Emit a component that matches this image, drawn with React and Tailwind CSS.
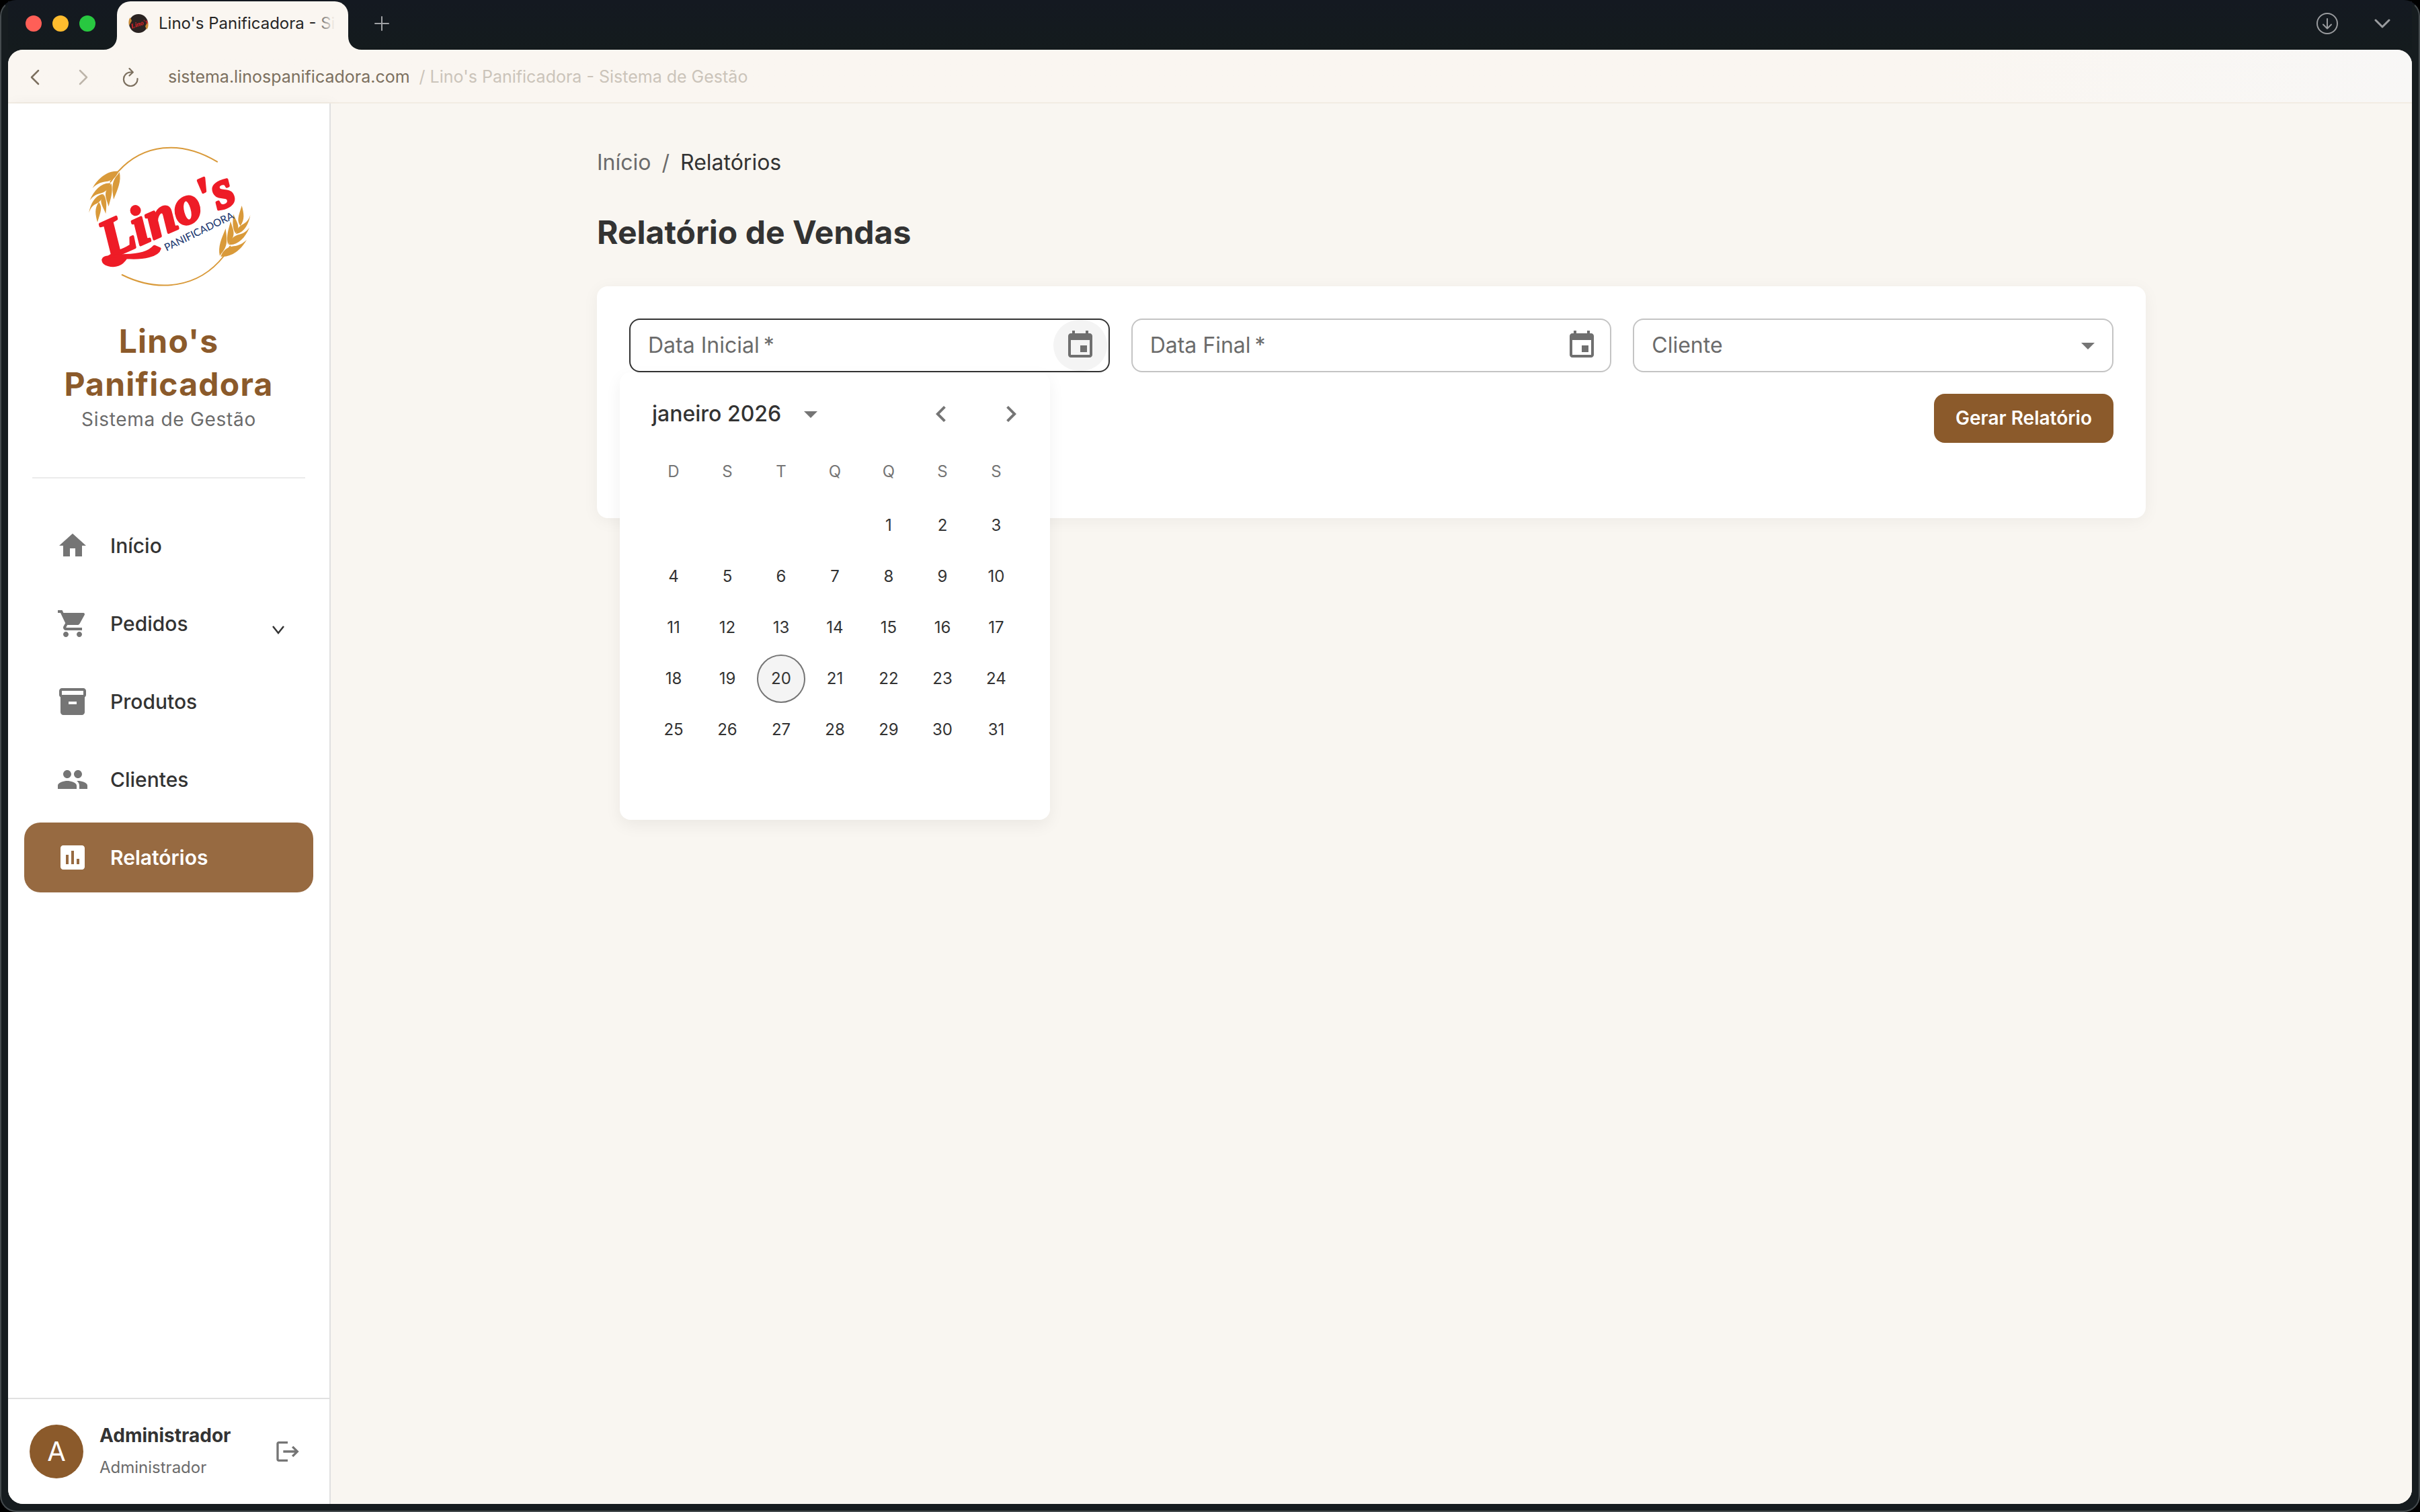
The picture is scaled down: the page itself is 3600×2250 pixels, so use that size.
import React, { useState } from 'react';
import { MdHome, MdShoppingCart, MdPeople, MdLogout, MdArrowDropDown, MdChevronLeft, MdChevronRight } from 'react-icons/md';

const WEEKDAYS = ['D', 'S', 'T', 'Q', 'Q', 'S', 'S'];
const DAYS = Array.from({ length: 31 }, (_, i) => i + 1);
const TODAY = 20;

const InventoryIcon = (props) => (
  <svg viewBox="0 0 24 24" fill="currentColor" {...props}>
    <path fillRule="evenodd" d="M20 2H4c-1 0-2 .9-2 2v3.01c0 .72.43 1.34 1 1.69V20c0 1.1 1.1 2 2 2h14c.9 0 2-.9 2-2V8.7c.57-.35 1-.97 1-1.69V4c0-1.1-1-2-2-2zM15 14H9v-2h6v2zm5-7H4V4h16v3z" />
  </svg>
);

const ReportIcon = (props) => (
  <svg viewBox="0 0 24 24" fill="currentColor" {...props}>
    <path d="M19 3H5c-1.1 0-2 .9-2 2v14c0 1.1.9 2 2 2h14c1.1 0 2-.9 2-2V5c0-1.1-.9-2-2-2zM9 17H7v-7h2v7zm4 0h-2V7h2v10zm4 0h-2v-4h2v4z" />
  </svg>
);

const CalendarIcon = (props) => (
  <svg viewBox="0 0 24 24" fill="currentColor" {...props}>
    <path d="M17 12h-5v5h5v-5zM16 1v2H8V1H6v2H5c-1.11 0-1.99.9-1.99 2L3 19c0 1.1.89 2 2 2h14c1.1 0 2-.9 2-2V5c0-1.1-.9-2-2-2h-1V1h-2zm3 18H5V8h14v11z" />
  </svg>
);

const MENU = [
  { label: 'Início', icon: MdHome },
  { label: 'Pedidos', icon: MdShoppingCart, expandable: true },
  { label: 'Produtos', icon: InventoryIcon },
  { label: 'Clientes', icon: MdPeople },
  { label: 'Relatórios', icon: ReportIcon, active: true },
];

function Wheat(props) {
  return (
    <g fill="#d99a3a" {...props}>
      <path d="M50 240C76 192 122 160 166 165C156 190 140 207 108 211C84 214 66 224 50 240Z" />
      <path d="M170 168C180 208 162 246 144 290C141 258 128 216 162 180Z" />
      <path d="M38 294C58 246 92 213 131 218C122 246 106 258 82 264C62 269 50 279 38 294Z" />
      <path d="M134 220C143 256 130 288 122 322C112 286 94 262 128 226Z" />
      <path d="M34 350C42 302 68 268 98 266C94 292 80 303 62 312C48 320 40 332 34 350Z" />
      <path d="M100 268C116 296 112 324 109 354C98 324 76 300 96 274Z" />
      <path d="M78 302C96 326 86 346 72 392C62 356 58 330 78 302Z" />
    </g>
  );
}

function Logo() {
  return (
    <svg viewBox="0 0 780 720" className="h-60 w-[260px]" role="img" aria-label="Lino's Panificadora">
      <g fill="none" stroke="#d99a3a" strokeWidth="6" strokeLinecap="round">
        <path d="M130 212L165 165C275 45 440 22 606 122" />
        <path d="M182 627C340 705 520 690 636 543L664 500" />
      </g>
      <Wheat />
      <Wheat transform="rotate(180 394 355)" />
      <g fill="#ee1c27" stroke="#ee1c27" strokeWidth="12" strokeLinejoin="round">
        <text transform="translate(124 556) rotate(-24)" className="font-['Liberation_Serif'] text-[242px] font-bold italic">Lino's</text>
        <path d="M196 540C250 540 300 530 326 500L350 510C342 540 280 556 200 550C180 582 150 592 120 582C92 574 90 552 112 548C140 545 170 541 196 540Z" />
      </g>
      <text transform="translate(380 522) rotate(-26)" fill="#1f3c73" className="font-['Lato'] text-[46px] font-medium">PANIFICADORA</text>
    </svg>
  );
}

function BrowserTabs() {
  return (
    <div className="flex h-[72px] items-stretch bg-linear-to-b from-[#141921] to-[#141b1d]">
      <div className="flex w-[162px] items-center gap-4 pb-1.5 pl-[26px]">
        <span className="size-6 rounded-full bg-[#ff5f57]" />
        <span className="size-6 rounded-full bg-[#febc2e]" />
        <span className="size-6 rounded-full bg-[#28c840]" />
      </div>
      <div className="relative flex w-[344px] items-center gap-3.5 rounded-t-[20px] bg-[#faf6f1] pb-1.5 pl-4">
        <svg viewBox="0 0 20 20" className="absolute bottom-0 -left-5 size-5" fill="#faf6f1"><path d="M20 0V20H0C12 20 20 12 20 0Z" /></svg>
        <svg viewBox="0 0 20 20" className="absolute -right-5 bottom-0 size-5" fill="#faf6f1"><path d="M0 0V20H20C8 20 0 12 0 0Z" /></svg>
        <svg viewBox="0 0 32 28" className="h-7 w-8 shrink-0">
          <ellipse cx="16" cy="14" rx="14" ry="14" fill="#2a2322" />
          <path d="M4 5C1 8 1 13 2 17L6 10Z" fill="#c98a35" />
          <path d="M28 23C31 20 31 15 30 11L26 18Z" fill="#c98a35" />
          <text x="4" y="18" transform="rotate(-18 16 14)" fill="#e02229" className="font-['Liberation_Serif'] text-[10px] font-bold italic">Lino's</text>
        </svg>
        <div className="relative text-2xl whitespace-nowrap text-[#262626]">
          Lino's Panificadora - Si
          <span className="absolute inset-y-0 right-0 w-8 bg-linear-to-r from-transparent to-[#faf6f1]" />
        </div>
      </div>
      <button aria-label="Nova aba" className="ml-[38px] flex items-center pb-1.5 text-[#a0a2a5]">
        <svg viewBox="0 0 24 24" className="size-6" fill="none" stroke="currentColor" strokeWidth="2" strokeLinecap="round"><path d="M12 2V22M2 12H22" /></svg>
      </button>
      <div className="ml-auto flex items-center gap-[52px] pr-8 pb-1.5 text-[#9a9c9f]">
        <button aria-label="Downloads">
          <svg viewBox="0 0 36 36" className="size-9" fill="none" stroke="currentColor" strokeWidth="2" strokeLinecap="round" strokeLinejoin="round"><circle cx="18" cy="18" r="15" /><path d="M18 11V25M12 19.500L18 25.500L24 19.500" /></svg>
        </button>
        <button aria-label="Listar abas">
          <svg viewBox="0 0 24 24" className="size-6" fill="none" stroke="currentColor" strokeWidth="3" strokeLinecap="round" strokeLinejoin="round"><path d="M2 7L12 17L22 7" /></svg>
        </button>
      </div>
    </div>
  );
}

function AddressBar() {
  return (
    <div className="flex h-20 items-center border-b-2 border-[#f2ece3] bg-linear-to-r from-[#faf6f1] from-80% to-[#f8f7f6] pt-1 pl-7 text-[25px] text-[#7c705f]">
      <button aria-label="Voltar">
        <svg viewBox="0 0 24 24" className="size-6" fill="none" stroke="currentColor" strokeWidth="2.500" strokeLinecap="round" strokeLinejoin="round"><path d="M17 2L7 12L17 22" /></svg>
      </button>
      <button aria-label="Avançar" className="ml-12 text-[#bdb5aa]">
        <svg viewBox="0 0 24 24" className="size-6" fill="none" stroke="currentColor" strokeWidth="2.500" strokeLinecap="round" strokeLinejoin="round"><path d="M7 2L17 12L7 22" /></svg>
      </button>
      <button aria-label="Recarregar" className="ml-11">
        <svg viewBox="0 0 28 28" className="size-7" fill="none" stroke="currentColor" strokeWidth="2.200" strokeLinecap="round" strokeLinejoin="round"><path d="M17.500 6.500H14A10.300 10.300 0 1 0 24.500 16M12.500 1L17.800 6.500L12.500 11.500" /></svg>
      </button>
      <span className="ml-[42px]">sistema.linospanificadora.com</span>
      <span className="ml-3.5 text-[#cbc4ba]">/ Lino's Panificadora - Sistema de Gestão</span>
    </div>
  );
}

function Sidebar() {
  return (
    <aside className="flex w-[480px] shrink-0 flex-col border-r-2 border-[#e0e0e0] bg-white shadow-[4px_0_20px_rgba(0,0,0,0.04)]">
      <div className="mx-9 flex flex-col items-center border-b-2 border-[#ebebeb] pt-[46px] pb-[66px] text-center">
        <Logo />
        <h1 className="mt-9 text-5xl leading-[64px] font-bold tracking-wide text-[#8b5a2b]">Lino's Panificadora</h1>
        <p className="text-[28px] leading-10 tracking-wide text-[#6b6b6b]">Sistema de Gestão</p>
      </div>
      <nav className="mt-12 flex flex-col gap-3 px-6">
        {MENU.map(item => {
          const Icon = item.icon;
          return (
            <a key={item.label} href="#" className={`flex h-[104px] items-center rounded-3xl pr-[42px] pl-12 text-[30px] ${item.active ? 'bg-[#976a41] font-semibold text-white' : 'font-medium text-[#333333]'}`}>
              <Icon className={`size-12 ${item.active ? 'text-white' : 'text-[#757575]'}`} />
              <span className="ml-8">{item.label}</span>
              {item.expandable && <svg viewBox="0 0 20 14" className="mt-5 ml-auto h-3.5 w-5" fill="none" stroke="currentColor" strokeWidth="2.500"><path d="M2 1L10 11L18 1" /></svg>}
            </a>
          );
        })}
      </nav>
      <div className="mt-auto flex h-[158px] items-center border-t-2 border-[#e0e0e0] pr-[42px] pl-8">
        <div className="flex size-20 items-center justify-center rounded-full bg-[#8b5a2b] text-[40px] text-white">A</div>
        <div className="ml-6">
          <p className="text-[28px] leading-[48px] font-bold text-[#333333]">Administrador</p>
          <p className="text-2xl leading-[48px] text-[#6b6b6b]">Administrador</p>
        </div>
        <button aria-label="Sair" className="ml-auto text-[#757575]"><MdLogout className="size-10" /></button>
      </div>
    </aside>
  );
}

function DateField({ id, label, active, children }) {
  return (
    <div className={`relative flex h-20 items-center rounded-2xl border-2 pr-0.5 ${active ? 'border-[#333333]' : 'border-[#c4c4c4]'}`}>
      <label htmlFor={id} className="absolute left-[26px] flex gap-1.5 text-[32px] text-[#6b6b6b]">
        {label}
        <span>*</span>
      </label>
      <input id={id} type="text" className="h-full min-w-0 flex-1 bg-transparent pl-[26px] text-[32px] text-[#333333] outline-none" />
      <button aria-label={`Escolher ${label}`} className={`flex h-full w-20 items-center justify-center rounded-full text-[#6f6f6f] ${active ? 'bg-[#f4f4f4]' : ''}`}>
        <CalendarIcon className="size-12" />
      </button>
      {children}
    </div>
  );
}

function CalendarPopup() {
  const [selected, setSelected] = useState(TODAY);

  return (
    <div className="absolute top-[calc(100%+2px)] -left-4 z-10 h-[666px] w-[640px] rounded-2xl bg-white shadow-[0_8px_24px_rgba(0,0,0,0.06)]">
      <div className="mt-[22px] flex h-20 items-center pr-[18px] pl-12">
        <button className="flex items-center gap-5 text-[32px] font-medium text-[#333333]">
          janeiro 2026
          <MdArrowDropDown className="size-12 text-[#757575]" />
        </button>
        <button aria-label="Mês anterior" className="ml-auto flex size-20 items-center justify-center text-[#757575]"><MdChevronLeft className="size-12" /></button>
        <button aria-label="Próximo mês" className="ml-6 flex size-20 items-center justify-center text-[#757575]"><MdChevronRight className="size-12" /></button>
      </div>
      <div className="mt-1.5 grid h-20 grid-cols-7 items-center px-10 text-center text-2xl text-[#757575]">
        {WEEKDAYS.map((d, i) => <span key={i}>{d}</span>)}
      </div>
      <div className="mt-1 grid grid-cols-7 justify-items-center gap-y-1 px-10 text-2xl text-[#333333]">
        {DAYS.map(day => (
          <button
            key={day}
            onClick={() => setSelected(day)}
            className={`size-[72px] rounded-full ${day === 1 ? 'col-start-5' : ''} ${day === selected ? 'border-2 border-[#757575] bg-[#f4f4f4]' : ''}`}
          >
            {day}
          </button>
        ))}
      </div>
    </div>
  );
}

export default function App() {
  return (
    <div className="min-h-screen bg-black font-['Inter',sans-serif]">
      <div className="flex min-h-screen flex-col rounded-[24px] border-2 border-[#454b4e] border-t-[#141921] bg-[#161c1f] px-2.5 pb-2.5">
        <BrowserTabs />
        <div className="flex flex-1 flex-col overflow-hidden rounded-[22px] bg-[#faf6f1]">
          <AddressBar />
          <div className="flex flex-1">
            <Sidebar />
            <main className="flex-1 bg-[#f9f6f1] px-12 pt-16">
              <div className="mx-auto max-w-[2304px]">
                <nav className="flex gap-4 text-[32px] leading-[48px] text-[#6b6b6b]">
                  <a href="#">Início</a>
                  <span>/</span>
                  <span className="text-[#333333]">Relatórios</span>
                </nav>
                <h2 className="mt-12 text-5xl leading-[64px] font-bold text-[#333333]">Relatório de Vendas</h2>
                <section className="mt-12 rounded-2xl bg-white p-12 shadow-[0_4px_24px_rgba(0,0,0,0.05)]">
                  <form className="grid grid-cols-3 gap-8 pb-16" onSubmit={e => e.preventDefault()}>
                    <DateField id="data-inicial" label="Data Inicial" active>
                      <CalendarPopup />
                    </DateField>
                    <DateField id="data-final" label="Data Final" />
                    <div className="relative flex h-20 items-center rounded-2xl border-2 border-[#c4c4c4]">
                      <label htmlFor="cliente" className="absolute left-[26px] text-[32px] text-[#6b6b6b]">Cliente</label>
                      <select id="cliente" defaultValue="" className="h-full w-full appearance-none bg-transparent pl-[26px] text-[32px] text-[#333333] outline-none">
                        <option value=""></option>
                      </select>
                      <MdArrowDropDown className="pointer-events-none absolute right-3 size-12 text-[#757575]" />
                    </div>
                    <button type="submit" className="col-span-3 justify-self-end rounded-2xl bg-[#8b5a2b] px-8 py-3 text-[28px] leading-[49px] font-semibold text-white">
                      Gerar Relatório
                    </button>
                  </form>
                </section>
              </div>
            </main>
          </div>
        </div>
      </div>
    </div>
  );
}
